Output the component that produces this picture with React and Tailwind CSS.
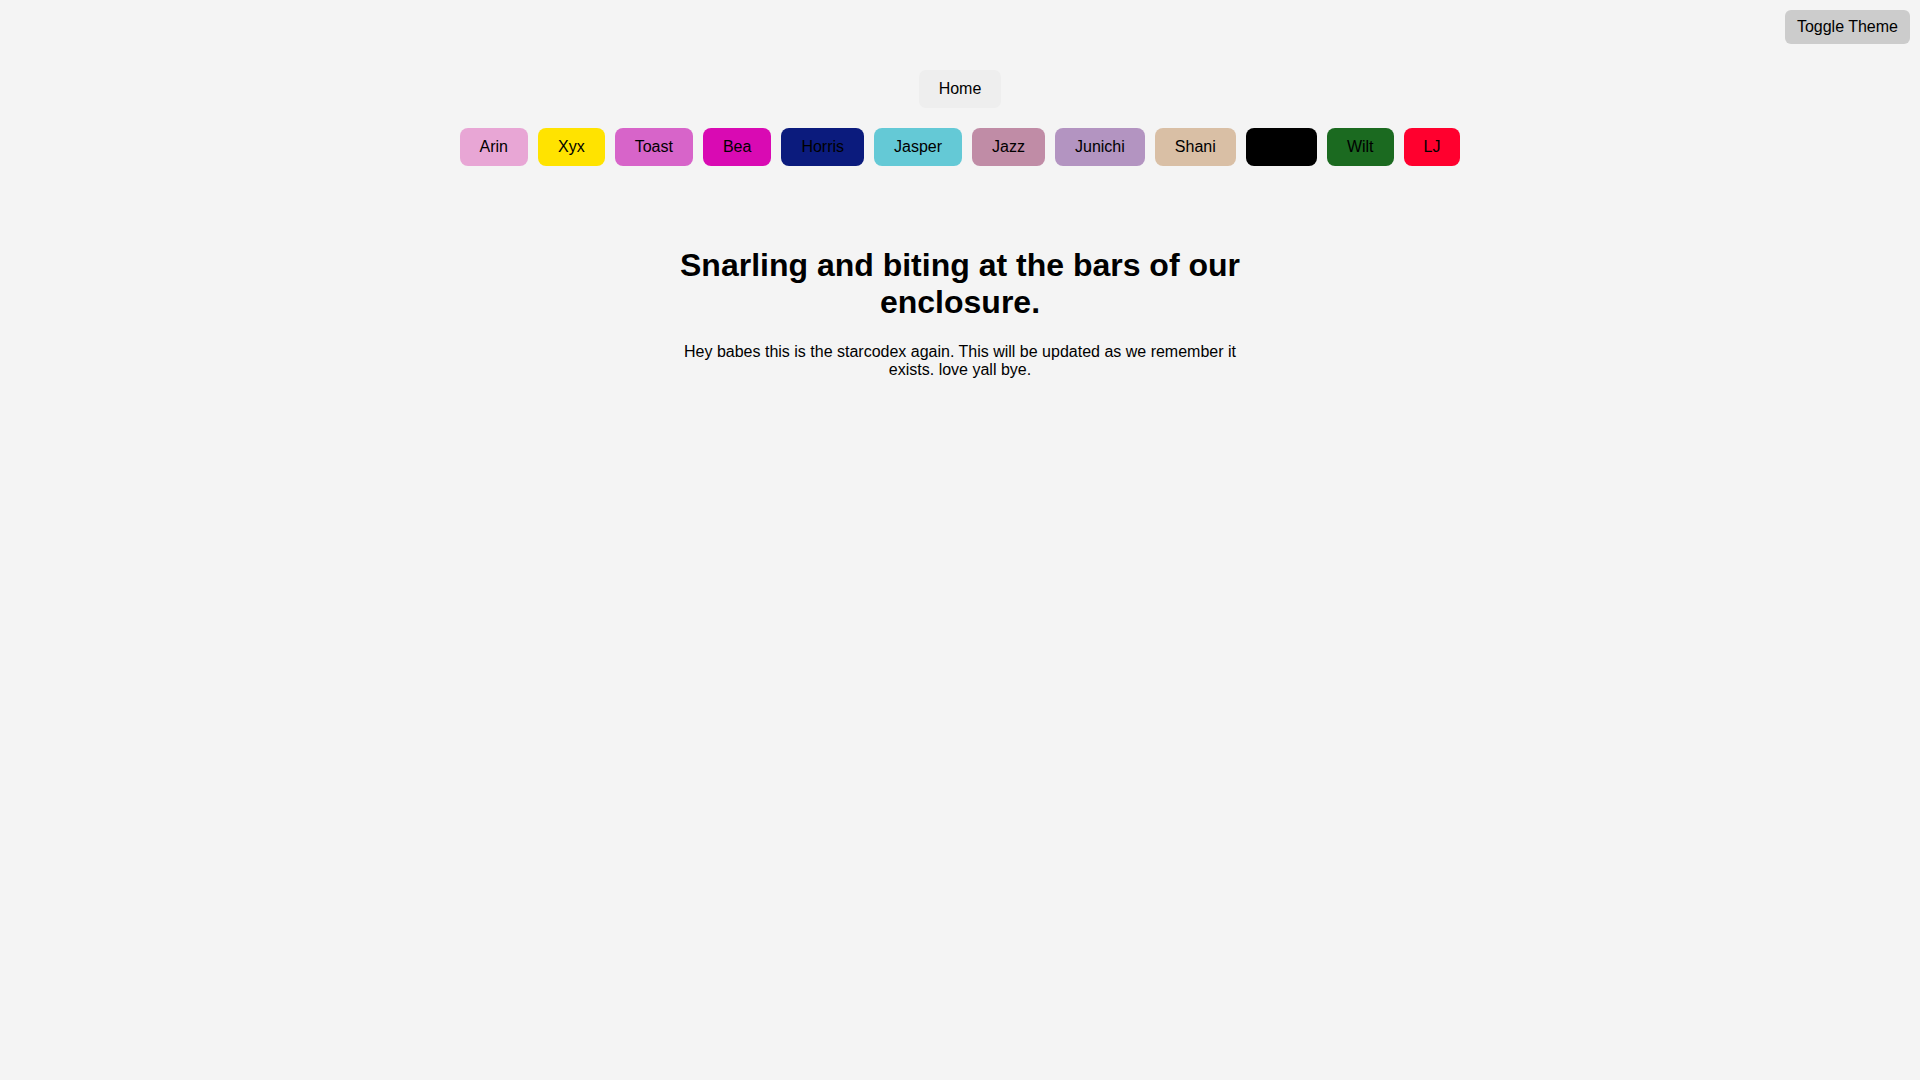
import React, { useState } from "react";

const characters = [
  { name: "Arin", color: "bg-[#e8a6d5]" },
  { name: "Xyx", color: "bg-[#ffe300]" },
  { name: "Toast", color: "bg-[#d764c9]" },
  { name: "Bea", color: "bg-[#d90ab3]" },
  { name: "Horris", color: "bg-[#0b1b7d]" },
  { name: "Jasper", color: "bg-[#64c9d6]" },
  { name: "Jazz", color: "bg-[#c08ca6]" },
  { name: "Junichi", color: "bg-[#b394c1]" },
  { name: "Shani", color: "bg-[#d9bfa5]" },
  { name: "Void", color: "bg-[#000000]" },
  { name: "Wilt", color: "bg-[#1b6a20]" },
  { name: "LJ", color: "bg-[#ff002e]" },
];

function App() {
  const [dark, setDark] = useState(false);

  return (
    <div
      className="relative w-full min-h-screen bg-[#f4f4f4] text-black"
      style={{ fontFamily: '"Liberation Sans", Arial, sans-serif' }}
    >
      <button
        onClick={() => setDark(!dark)}
        className="absolute top-[10px] right-[10px] bg-[#cccccc] rounded-[6px] px-3 py-2 text-base leading-[18px] cursor-pointer"
      >
        Toggle Theme
      </button>

      <div className="flex flex-col items-center pt-[70px]">
        <button className="bg-[#eeeeee] rounded-[7px] px-5 py-[10px] text-base leading-[18px] cursor-pointer">
          Home
        </button>

        {/* Character buttons */}
        <div className="flex flex-wrap justify-center gap-[10px] mt-5">
          {characters.map((c) => (
            <button
              key={c.name}
              className={`${c.color} rounded-[8px] px-5 py-[10px] text-base leading-[18px] text-black cursor-pointer`}
            >
              {c.name}
            </button>
          ))}
        </div>

        <div className="mt-[81px] w-[600px] text-center">
          <h1 className="text-[32px] leading-[37px] font-bold">
            Snarling and biting at the bars of our enclosure.
          </h1>
          <p className="mt-[22px] text-base leading-[18px]">
            Hey babes this is the starcodex again. This will be updated as we
            remember it exists. love yall bye.
          </p>
        </div>
      </div>
    </div>
  );
}

export default App;
